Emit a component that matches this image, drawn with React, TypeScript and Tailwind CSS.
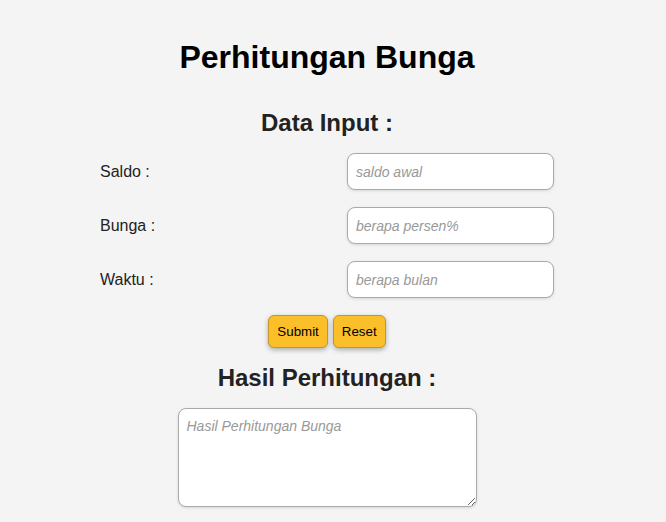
export default function App() {
  const rows = [
    { label: 'Saldo :', placeholder: 'saldo awal' },
    { label: 'Bunga :', placeholder: 'berapa persen%' },
    { label: 'Waktu :', placeholder: 'berapa bulan' },
  ]

  return (
    <div className="min-h-[522px] bg-[#f4f4f4] font-['Liberation_Sans',Arial,sans-serif] text-[#222]">
      <div className="ml-[100px] w-[454px] pt-[39px] flex flex-col">
        <h1 className="text-center text-[32px] leading-[37px] font-bold text-black">Perhitungan Bunga</h1>
        <h2 className="mt-[33px] text-center text-[24px] leading-[28px] font-bold">Data Input :</h2>

        <div className="mt-[16px] flex flex-col gap-[17px]">
          {rows.map((r) => (
            <div key={r.label} className="flex items-center justify-between">
              <label className="text-[16px]">{r.label}</label>
              <input
                type="text"
                placeholder={r.placeholder}
                className="w-[207px] h-[37px] rounded-[8px] border border-[#aaa] bg-white px-[8px] text-[14px] placeholder:italic placeholder:text-[#999] shadow-[0_1px_3px_rgba(0,0,0,0.12)] outline-none"
              />
            </div>
          ))}
        </div>

        <div className="mt-[17px] flex justify-center gap-[5px]">
          <button className="h-[33px] px-[8px] rounded-[6px] border border-[#c2962a] bg-[#fbbf2a] text-[13.33px] text-black shadow-[0_2px_5px_rgba(0,0,0,0.3)]">
            Submit
          </button>
          <button className="h-[33px] px-[8px] rounded-[6px] border border-[#c2962a] bg-[#fbbf2a] text-[13.33px] text-black shadow-[0_2px_5px_rgba(0,0,0,0.3)]">
            Reset
          </button>
        </div>

        <h2 className="mt-[16px] text-center text-[24px] leading-[28px] font-bold">Hasil Perhitungan :</h2>

        <div className="mt-[16px] flex justify-center">
          <textarea
            placeholder="Hasil Perhitungan Bunga"
            className="w-[299px] h-[99px] rounded-[8px] border border-[#aaa] bg-white p-[8px] text-[14px] leading-[18px] placeholder:italic placeholder:text-[#999] shadow-[0_1px_3px_rgba(0,0,0,0.12)] outline-none"
          />
        </div>
      </div>
    </div>
  )
}
